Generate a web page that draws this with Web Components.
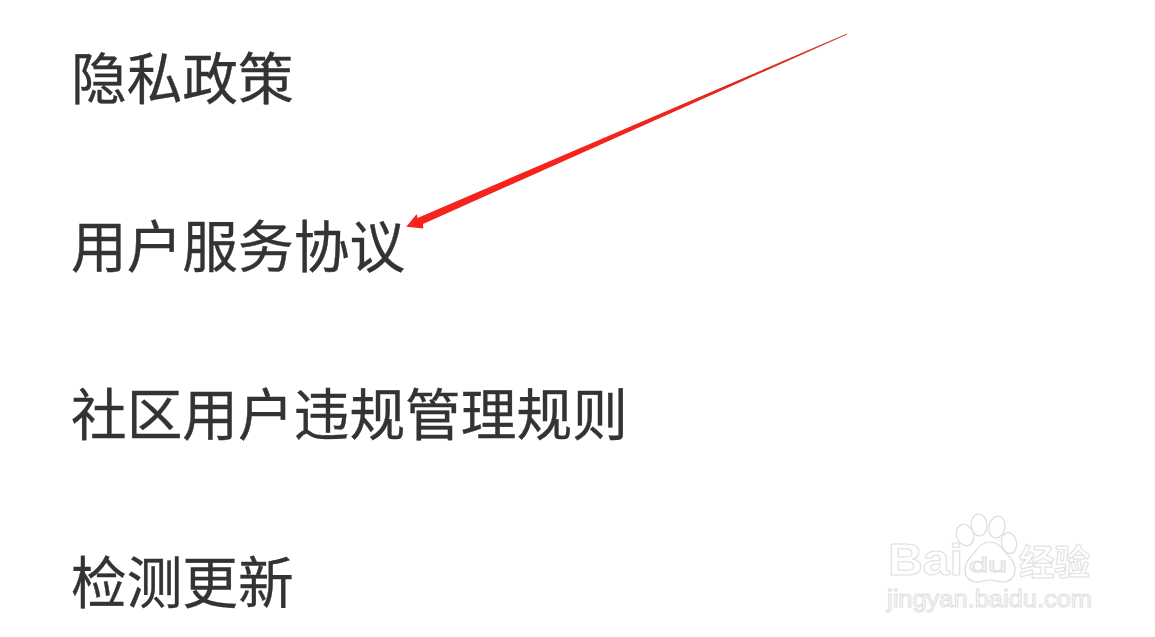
<!DOCTYPE html>
<html lang="zh">
<head>
<meta charset="utf-8">
<title>设置</title>
<style>
html, body { margin: 0; background: #fff; }
body { width: 1155px; height: 637px; overflow: hidden; position: relative; }
</style>
</head>
<body>
<menu-list>
  <menu-row>隐私政策</menu-row>
  <menu-row>用户服务协议</menu-row>
  <menu-row>社区用户违规管理规则</menu-row>
  <menu-row>检测更新</menu-row>
</menu-list>
<red-arrow></red-arrow>
<jy-watermark></jy-watermark>

<script>
// list of settings rows
var tplList = document.createElement("template");
tplList.innerHTML = `
<style>
:host { display: flex; flex-direction: column; gap: 112px; padding: 47px 0 0 71px; }
</style>
<slot></slot>
`;
class MenuList extends HTMLElement {
  constructor() {
    super();
    this.attachShadow({ mode: "open" });
    this.shadowRoot.appendChild(tplList.content.cloneNode(true));
  }
}
customElements.define("menu-list", MenuList);

var tplRow = document.createElement("template");
tplRow.innerHTML = `
<style>
:host {
  display: block;
  height: 56px;
  font-family: "Noto Sans CJK SC", "Noto Sans", sans-serif;
  font-size: 55.7px;
  line-height: 56px;
  color: #333333;
  -webkit-text-stroke: 0.35px #333333;
  white-space: nowrap;
}
</style>
<slot></slot>
`;
class MenuRow extends HTMLElement {
  constructor() {
    super();
    this.attachShadow({ mode: "open" });
    this.shadowRoot.appendChild(tplRow.content.cloneNode(true));
  }
}
customElements.define("menu-row", MenuRow);

// annotation drawn over the screenshot
class RedArrow extends HTMLElement {
  constructor() {
    super();
    this.attachShadow({ mode: "open" }).innerHTML = `
<style>
:host { position: absolute; left: 0; top: 0; width: 1155px; height: 637px; pointer-events: none; }
svg { display: block; }
</style>
<svg width="1155" height="637" viewBox="0 0 1155 637">
  <defs>
    <linearGradient id="shaft" gradientUnits="userSpaceOnUse" x1="847" y1="34" x2="406" y2="227">
      <stop offset="0" stop-color="#cf3a2c"/>
      <stop offset="0.3" stop-color="#e0281c"/>
      <stop offset="0.55" stop-color="#f5231c"/>
      <stop offset="1" stop-color="#f5231c"/>
    </linearGradient>
  </defs>
  <polygon fill="url(#shaft)" points="847,33.5 417.5,218 416.7,214 406.3,226.7 423.3,228.5 423,224 847,34.4"/>
</svg>`;
  }
}
customElements.define("red-arrow", RedArrow);

// baidu jingyan watermark, outlined letters
class JyWatermark extends HTMLElement {
  constructor() {
    super();
    this.attachShadow({ mode: "open" }).innerHTML = `
<style>
:host { position: absolute; left: 860px; top: 500px; width: 260px; height: 130px; pointer-events: none; }
svg { display: block; }
text { fill: #fff; stroke: #e0e0e0; stroke-width: 1; }
.lat { font-family: "Liberation Sans", sans-serif; }
.cjk { font-family: "Noto Sans CJK SC", sans-serif; font-weight: 700; }
ellipse, path { fill: #fff; stroke: #dcdcdc; stroke-width: 1.2; }
</style>
<svg width="260" height="130" viewBox="0 0 260 130">
  <ellipse cx="105" cy="35" rx="8.5" ry="11" transform="rotate(-20 105 35)"/>
  <ellipse cx="119" cy="25" rx="8" ry="11" transform="rotate(-5 119 25)"/>
  <ellipse cx="137" cy="27" rx="8" ry="11" transform="rotate(12 137 27)"/>
  <ellipse cx="149" cy="43" rx="7.5" ry="10.5" transform="rotate(-10 149 43)"/>
  <path d="M130 42c-8 0-12 6-16 11-4 5-9 9-9 17 0 8 6 12 12 12 5 0 9-2 13-2 4 0 8 2 13 2 6 0 12-4 12-12 0-8-5-12-9-17-4-5-8-11-16-11z"/>
  <text class="lat" x="28" y="75" font-size="44" font-weight="700" textLength="75" lengthAdjust="spacingAndGlyphs">Bai</text>
  <text class="lat" x="109" y="72" font-size="21" textLength="38" lengthAdjust="spacingAndGlyphs">du</text>
  <text class="cjk" x="159" y="75" font-size="35" textLength="71" lengthAdjust="spacingAndGlyphs">经验</text>
  <text class="lat" x="27" y="107" font-size="23" textLength="205" lengthAdjust="spacingAndGlyphs">jingyan.baidu.com</text>
</svg>`;
  }
}
customElements.define("jy-watermark", JyWatermark);
</script>
</body>
</html>
